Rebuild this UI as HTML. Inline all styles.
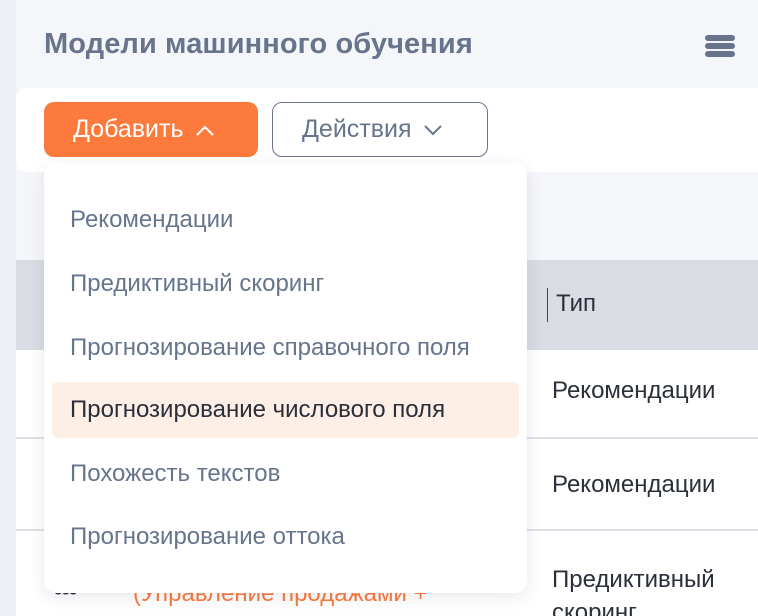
<!DOCTYPE html><html><head><meta charset="utf-8"><style>
html,body{margin:0;width:758px;height:616px;overflow:hidden}
body{background:#f5f6fa;font-family:"Liberation Sans",sans-serif;position:relative}
.a{position:absolute}
.t{white-space:nowrap}
</style></head><body>
<div class="a" style="left:0;top:0;width:16px;height:616px;background:#eef0f5"></div>
<div class="a t" style="left:44px;top:28px;font-size:29px;font-weight:bold;color:#67748c;letter-spacing:0.1px">Модели машинного обучения</div>
<div class="a" style="left:705px;top:35px;width:30px;height:6px;border-radius:3px;background:#67748c"></div>
<div class="a" style="left:705px;top:43px;width:30px;height:6px;border-radius:3px;background:#67748c"></div>
<div class="a" style="left:705px;top:51px;width:30px;height:6px;border-radius:3px;background:#67748c"></div>
<div class="a" style="left:16px;top:88px;width:760px;height:84px;background:#fff;border-radius:10px"></div>
<div class="a t" style="left:44px;top:102px;width:214px;height:55px;background:#fb7a3c;border-radius:10px;color:#fff;font-size:25px;line-height:55px;padding-left:29px;box-sizing:border-box">Добавить <svg width="22" height="14" viewBox="0 0 22 14" style="margin-left:4px"><path d="M3 12L11 4L19 12" stroke="#fff" stroke-width="2" fill="none"/></svg></div>
<div class="a t" style="left:272px;top:102px;width:216px;height:55px;border:1px solid #6b7490;border-radius:10px;color:#67748c;font-size:25px;line-height:53px;padding-left:29px;box-sizing:border-box;background:#fff">Действия <svg width="22" height="14" viewBox="0 0 22 14" style="margin-left:4px"><path d="M3 3L11 11L19 3" stroke="#67748c" stroke-width="2" fill="none"/></svg></div>
<div class="a" style="left:16px;top:260px;width:760px;height:90px;background:#d9dce3"></div>
<div class="a" style="left:547px;top:288px;width:1px;height:34px;background:#444"></div>
<div class="a t" style="left:556px;top:290px;font-size:24px;color:#2a2f3a">Тип</div>
<div class="a" style="left:16px;top:350px;width:760px;height:266px;background:#fff"></div>
<div class="a" style="left:16px;top:437px;width:760px;height:2px;background:#dde0e6"></div>
<div class="a" style="left:16px;top:529px;width:760px;height:2px;background:#dde0e6"></div>
<div class="a t" style="left:552px;top:377px;font-size:24px;color:#2a2f3a">Рекомендации</div>
<div class="a t" style="left:552px;top:471px;font-size:24px;color:#2a2f3a">Рекомендации</div>
<div class="a t" style="left:552px;top:563px;font-size:24px;color:#2a2f3a;line-height:33px">Предиктивный<br>скоринг</div>
<div class="a t" style="left:53px;top:574px;font-size:30px;color:#2a2f3a;font-weight:bold;letter-spacing:-3px">•••</div>
<div class="a t" style="left:133px;top:580px;font-size:24px;color:#fb7a3c">(Управление продажами +</div>
<div class="a" style="left:44px;top:163px;width:483px;height:430px;background:#fff;border-radius:12px;box-shadow:0 4px 16px rgba(60,70,100,.12)"></div>
<div class="a" style="left:52px;top:382px;width:467px;height:56px;background:#fdeee6;border-radius:6px"></div>
<div class="a t" style="left:70px;top:206px;font-size:24px;color:#67748c">Рекомендации</div>
<div class="a t" style="left:70px;top:270px;font-size:24px;color:#67748c">Предиктивный скоринг</div>
<div class="a t" style="left:70px;top:334px;font-size:24px;color:#67748c">Прогнозирование справочного поля</div>
<div class="a t" style="left:70px;top:396px;font-size:24px;color:#2a2f3a">Прогнозирование числового поля</div>
<div class="a t" style="left:70px;top:460px;font-size:24px;color:#67748c">Похожесть текстов</div>
<div class="a t" style="left:70px;top:523px;font-size:24px;color:#67748c">Прогнозирование оттока</div>
</body></html>
